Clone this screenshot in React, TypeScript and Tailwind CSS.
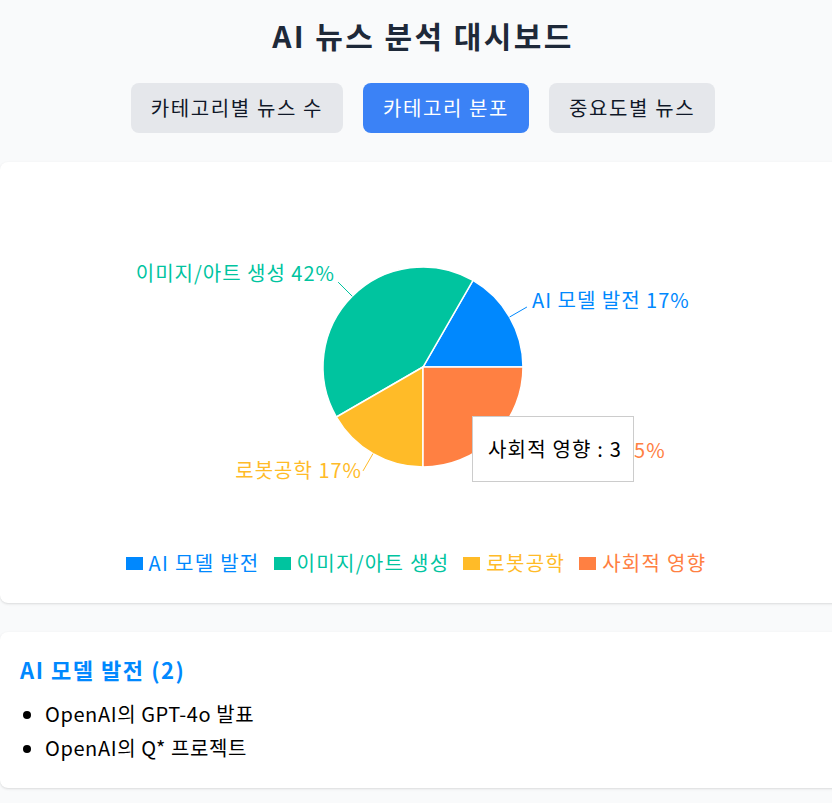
import React from "react";

type Slice = {
  name: string;
  value: number;
  color: string;
};

const slices: Slice[] = [
  { name: "AI 모델 발전", value: 2, color: "#0088FE" },
  { name: "이미지/아트 생성", value: 5, color: "#00C49F" },
  { name: "로봇공학", value: 2, color: "#FFBB28" },
  { name: "사회적 영향", value: 3, color: "#FF8042" },
];

const tabs = ["카테고리별 뉴스 수", "카테고리 분포", "중요도별 뉴스"];

const font = { fontFamily: '"Noto Sans CJK KR", "Noto Sans", sans-serif' };

// pie geometry (svg coords)
const CX = 403;
const CY = 185;
const R = 100;

function point(angle: number, radius: number) {
  const rad = (angle * Math.PI) / 180;
  return [CX + radius * Math.cos(rad), CY - radius * Math.sin(rad)];
}

function slicePath(start: number, end: number) {
  const [x1, y1] = point(start, R);
  const [x2, y2] = point(end, R);
  const large = end - start > 180 ? 1 : 0;
  return `M${CX},${CY} L${x1},${y1} A${R},${R} 0 ${large} 0 ${x2},${y2} Z`;
}

const labels = [
  { text: "AI 모델 발전 17%", x: 512, y: 117, anchor: "start" },
  { text: "이미지/아트 생성 42%", x: 315, y: 90, anchor: "end" },
  { text: "로봇공학 17%", x: 342, y: 287, anchor: "end" },
  { text: "사회적 영향 25%", x: 494, y: 267, anchor: "start" },
];

function PieChart() {
  const total = slices.reduce((sum, s) => sum + s.value, 0);
  let angle = 0;
  const arcs = slices.map((s) => {
    const start = angle;
    const end = angle + (s.value / total) * 360;
    angle = end;
    return { ...s, start, end, mid: (start + end) / 2 };
  });

  return (
    <svg width="806" height="361" viewBox="0 0 806 361" className="block">
      {arcs.map((a) => (
        <path key={a.name} d={slicePath(a.start, a.end)} fill={a.color} stroke="#fff" strokeWidth="1.5" />
      ))}
      {arcs.map((a) => {
        const [x1, y1] = point(a.mid, R);
        const [x2, y2] = point(a.mid, R + 20);
        return <line key={a.name} x1={x1} y1={y1} x2={x2} y2={y2} stroke={a.color} strokeWidth="1" />;
      })}
      {labels.map((l, i) => (
        <text
          key={l.text}
          x={l.x}
          y={l.y}
          textAnchor={l.anchor as "start" | "end"}
          dominantBaseline="central"
          fill={slices[i].color}
          fontSize="20"
          letterSpacing="1"
          style={font}
        >
          {l.text}
        </text>
      ))}
    </svg>
  );
}

export default function App() {
  return (
    <div className="min-h-screen w-full overflow-hidden bg-gray-50" style={font}>
      <div className="w-[846px] pt-[17px]">
        <h1 className="text-center text-[30px] font-bold leading-[36px] tracking-[0.08em] text-gray-800">
          AI 뉴스 분석 대시보드
        </h1>

        <div className="mt-[30px] flex justify-center gap-5">
          {tabs.map((tab, i) => (
            <button
              key={tab}
              type="button"
              className={
                i === 1
                  ? "h-[50px] rounded-lg bg-[#3b82f6] px-5 text-xl tracking-[0.08em] text-white"
                  : "h-[50px] rounded-lg bg-[#e5e7eb] px-5 text-xl tracking-[0.08em] text-gray-900"
              }
            >
              {tab}
            </button>
          ))}
        </div>

        <section className="relative mt-[29px] rounded-lg bg-white p-5 shadow">
          <PieChart />
          <div className="flex h-[40px] items-center justify-center">
            {slices.map((s) => (
              <div key={s.name} className="mr-[14px] flex items-center">
                <span className="mr-[6px] inline-block h-[13px] w-[17px]" style={{ backgroundColor: s.color }} />
                <span className="text-xl leading-none tracking-[0.065em]" style={{ color: s.color }}>
                  {s.name}
                </span>
              </div>
            ))}
          </div>

          <div className="absolute left-[472px] top-[254px] flex h-[66px] w-[162px] items-center border border-[#cccccc] bg-white pl-[15px] text-xl tracking-[0.06em] text-black">
            사회적 영향 : 3
          </div>
        </section>

        <section className="mt-[29px] rounded-lg bg-white px-5 pb-[25px] pt-5 shadow">
          <h2 className="text-[22px] font-bold leading-[35px] tracking-[0.07em] text-[#0088FE]">AI 모델 발전 (2)</h2>
          <ul className="mt-3 flex list-disc flex-col gap-1 pl-[25px] text-xl leading-[30px] tracking-[0.03em] text-black">
            <li>OpenAI의 GPT-4o 발표</li>
            <li>OpenAI의 Q* 프로젝트</li>
          </ul>
        </section>
      </div>
    </div>
  );
}
